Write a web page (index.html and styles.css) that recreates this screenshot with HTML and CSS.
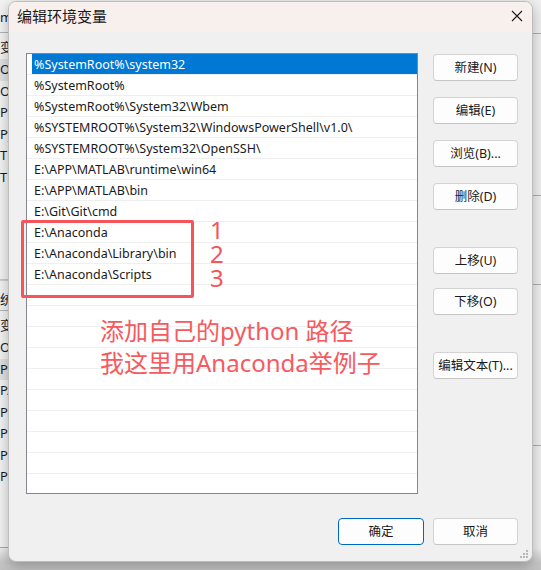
FILE: index.html
```html
<!DOCTYPE html>
<html lang="zh-CN">
<head>
<meta charset="utf-8">
<title>编辑环境变量</title>
<link rel="stylesheet" href="styles.css">
</head>
<body>
<div class="desktop">
  <div class="bgwin bgwin-left">
    <div class="bg-title">m</div>
    <div class="bg-sec">变</div>
    <div class="bg-row hl">Or</div>
    <div class="bg-row">Or</div>
    <div class="bg-row">Pa</div>
    <div class="bg-row">Py</div>
    <div class="bg-row">TE</div>
    <div class="bg-row">TM</div>
    <div class="bg-gap"></div>
    <div class="bg-sec2">统</div>
    <div class="bg-sec">变</div>
    <div class="bg-row">OS</div>
    <div class="bg-row hl">Pa</div>
    <div class="bg-row">PA</div>
    <div class="bg-row">PR</div>
    <div class="bg-row">PR</div>
    <div class="bg-row">PR</div>
    <div class="bg-row">PR</div>
  </div>
  <div class="bgwin bgwin-right">
    <div class="bgr-line l1"></div>
    <div class="bgr-line l2"></div>
    <div class="bgr-line l3"></div>
    <div class="bgr-line l4"></div>
  </div>

  <div class="dialog">
    <div class="titlebar">
      <span class="title">编辑环境变量</span>
      <span class="close">
        <svg width="12" height="12" viewBox="0 0 12 12"><path d="M1 1L11 11M11 1L1 11" stroke="#1b1b1b" stroke-width="1.1" fill="none"/></svg>
      </span>
    </div>
    <div class="body">
      <div class="main">
        <div class="listwrap">
          <div class="list">
            <div class="row sel"><span class="cell">%SystemRoot%\system32</span></div>
            <div class="row"><span class="cell">%SystemRoot%</span></div>
            <div class="row"><span class="cell">%SystemRoot%\System32\Wbem</span></div>
            <div class="row"><span class="cell">%SYSTEMROOT%\System32\WindowsPowerShell\v1.0\</span></div>
            <div class="row"><span class="cell">%SYSTEMROOT%\System32\OpenSSH\</span></div>
            <div class="row"><span class="cell">E:\APP\MATLAB\runtime\win64</span></div>
            <div class="row"><span class="cell">E:\APP\MATLAB\bin</span></div>
            <div class="row"><span class="cell">E:\Git\Git\cmd</span></div>
            <div class="row"><span class="cell">E:\Anaconda</span></div>
            <div class="row"><span class="cell">E:\Anaconda\Library\bin</span></div>
            <div class="row"><span class="cell">E:\Anaconda\Scripts</span></div>
            <div class="row"><span class="cell"></span></div>
            <div class="row"><span class="cell"></span></div>
            <div class="row"><span class="cell"></span></div>
            <div class="row"><span class="cell"></span></div>
            <div class="row"><span class="cell"></span></div>
            <div class="row"><span class="cell"></span></div>
            <div class="row"><span class="cell"></span></div>
            <div class="row"><span class="cell"></span></div>
            <div class="row"><span class="cell"></span></div>
            <div class="row"><span class="cell"></span></div>
            <div class="row"><span class="cell"></span></div>
          </div>
          <div class="redbox"></div>
          <div class="nums">1
2
3</div>
          <div class="note">添加自己的python 路径<br>我这里用Anaconda举例子</div>
        </div>
        <div class="side">
          <button class="btn">新建(N)</button>
          <button class="btn">编辑(E)</button>
          <button class="btn">浏览(B)...</button>
          <button class="btn">删除(D)</button>
          <button class="btn">上移(U)</button>
          <button class="btn">下移(O)</button>
          <button class="btn">编辑文本(T)...</button>
        </div>
      </div>
      <div class="footer">
        <button class="btn primary">确定</button>
        <button class="btn">取消</button>
      </div>
    </div>
    <svg class="grip" width="8" height="8" viewBox="0 0 8 8">
      <rect x="6" y="0" width="2" height="2" fill="#b8b8b8"/>
      <rect x="3" y="3" width="2" height="2" fill="#b8b8b8"/>
      <rect x="6" y="3" width="2" height="2" fill="#b8b8b8"/>
      <rect x="0" y="6" width="2" height="2" fill="#b8b8b8"/>
      <rect x="3" y="6" width="2" height="2" fill="#b8b8b8"/>
      <rect x="6" y="6" width="2" height="2" fill="#b8b8b8"/>
    </svg>
  </div>
</div>
</body>
</html>
```

FILE: styles.css
```css
* { box-sizing: border-box; }
html, body { margin: 0; padding: 0; }
body {
  width: 541px;
  height: 570px;
  overflow: hidden;
  background: #c9c9c9;
  font-family: "Noto Sans", "Noto Sans CJK SC", sans-serif;
  color: #1a1a1a;
}
.desktop {
  position: relative;
  width: 541px;
  height: 570px;
  background: linear-gradient(#f0f0f0 0, #f0f0f0 548px, #c7c7c7 562px, #c2c2c2 570px);
}

/* background window (partly hidden) */
.bgwin { position: absolute; top: 0; }
.bgwin-left {
  left: 0;
  width: 30px;
  height: 548px;
  background: #f3f3f3;
  font-size: 13px;
  line-height: 21.5px;
  overflow: hidden;
  border-bottom: 1px solid #a8a8a8;
}
.bg-title { height: 33px; padding-top: 7px; border-bottom: 1px solid #b5b5b5; font-size: 13px; line-height: 20px; }
.bg-sec { height: 26px; padding-top: 4px; line-height: 20px; }
.bg-sec2 { height: 31px; padding-top: 8px; line-height: 20px; border-bottom: 1px solid #b5b5b5; border-top: 1px solid #d0d0d0; }
.bg-row { height: 21.5px; white-space: nowrap; }
.bg-row.hl { background: #e1e1e1; }
.bg-gap { height: 92px; border-bottom: 1px solid #c8c8c8; }
.bgwin-right {
  left: 530px;
  width: 11px;
  height: 548px;
  background: #f0f0f0;
}
.bgr-line { position: absolute; left: 0; right: 0; height: 1px; background: #b0b0b0; }
.bgr-line.l1 { top: 33px; }
.bgr-line.l2 { top: 195px; }
.bgr-line.l3 { top: 284px; }
.bgr-line.l4 { top: 445px; }

/* dialog */
.dialog {
  position: absolute;
  left: 8px;
  top: 1px;
  width: 525px;
  height: 561px;
  background: #f0f0f0;
  border: 1px solid #bdbdbd;
  border-radius: 8px;
  box-shadow: 0 4px 14px rgba(0,0,0,0.28);
  overflow: hidden;
  display: flex;
  flex-direction: column;
}
.titlebar {
  height: 30px;
  background: #f7f0ed;
  display: flex;
  align-items: center;
  justify-content: space-between;
  padding: 0 9px 0 8px;
  flex: none;
}
.title { font-size: 15px; color: #1a1a1a; line-height: 20px; margin-top: -2px; }
.close { display: flex; width: 12px; height: 12px; margin-top: -2px; }

.body { flex: 1; display: flex; flex-direction: column; }
.main { display: flex; padding: 21px 0 0 17px; gap: 15px; }

.listwrap { position: relative; width: 392px; height: 441px; }
.list {
  width: 100%;
  height: 100%;
  background: #ffffff;
  border: 1px solid #85858f;
  overflow: hidden;
  font-size: 12.5px;
}
.row {
  height: 21px;
  border-bottom: 1px solid #efefef;
  padding-left: 5px;
}
.cell {
  display: block;
  height: 20px;
  line-height: 21px;
  padding-left: 2px;
  white-space: nowrap;
  color: #1a1a1a;
}
.row.sel .cell { background: #0078d4; color: #ffffff; }

.redbox {
  position: absolute;
  left: -5px;
  top: 167px;
  width: 173px;
  height: 78px;
  border: 3px solid #f4545a;
  border-radius: 2px;
}
.nums {
  position: absolute;
  left: 184px;
  top: 165px;
  font-size: 24px;
  line-height: 24px;
  color: #f4545a;
  white-space: pre-line;
}
.note {
  position: absolute;
  left: 74px;
  top: 262px;
  font-size: 24px;
  line-height: 32px;
  color: #f65a5e;
  white-space: nowrap;
}

.side {
  width: 85px;
  display: flex;
  flex-direction: column;
  padding-top: 1px;
}
.btn {
  width: 85px;
  height: 27px;
  margin: 0 0 16px 0;
  padding: 0;
  background: #fdfdfd;
  border: 1px solid #d3d3d3;
  border-bottom-color: #c4c4c4;
  border-radius: 4px;
  font-family: "Noto Sans", "Noto Sans CJK SC", sans-serif;
  font-size: 12.5px;
  color: #1a1a1a;
  line-height: 25px;
  text-align: center;
}
.side .btn:nth-child(5) { margin-top: 21px; }
.side .btn:nth-child(6) { margin-top: -2px; margin-bottom: 0; }
.side .btn:nth-child(7) { margin-top: 37px; }

.footer {
  display: flex;
  justify-content: flex-end;
  gap: 9px;
  padding: 0 14px 0 0;
  margin-top: 24px;
}
.footer .btn { margin: 0; }
.btn.primary { border: 1px solid #0067c0; width: 86px; }

.grip { position: absolute; right: 4px; bottom: 3px; }
```
